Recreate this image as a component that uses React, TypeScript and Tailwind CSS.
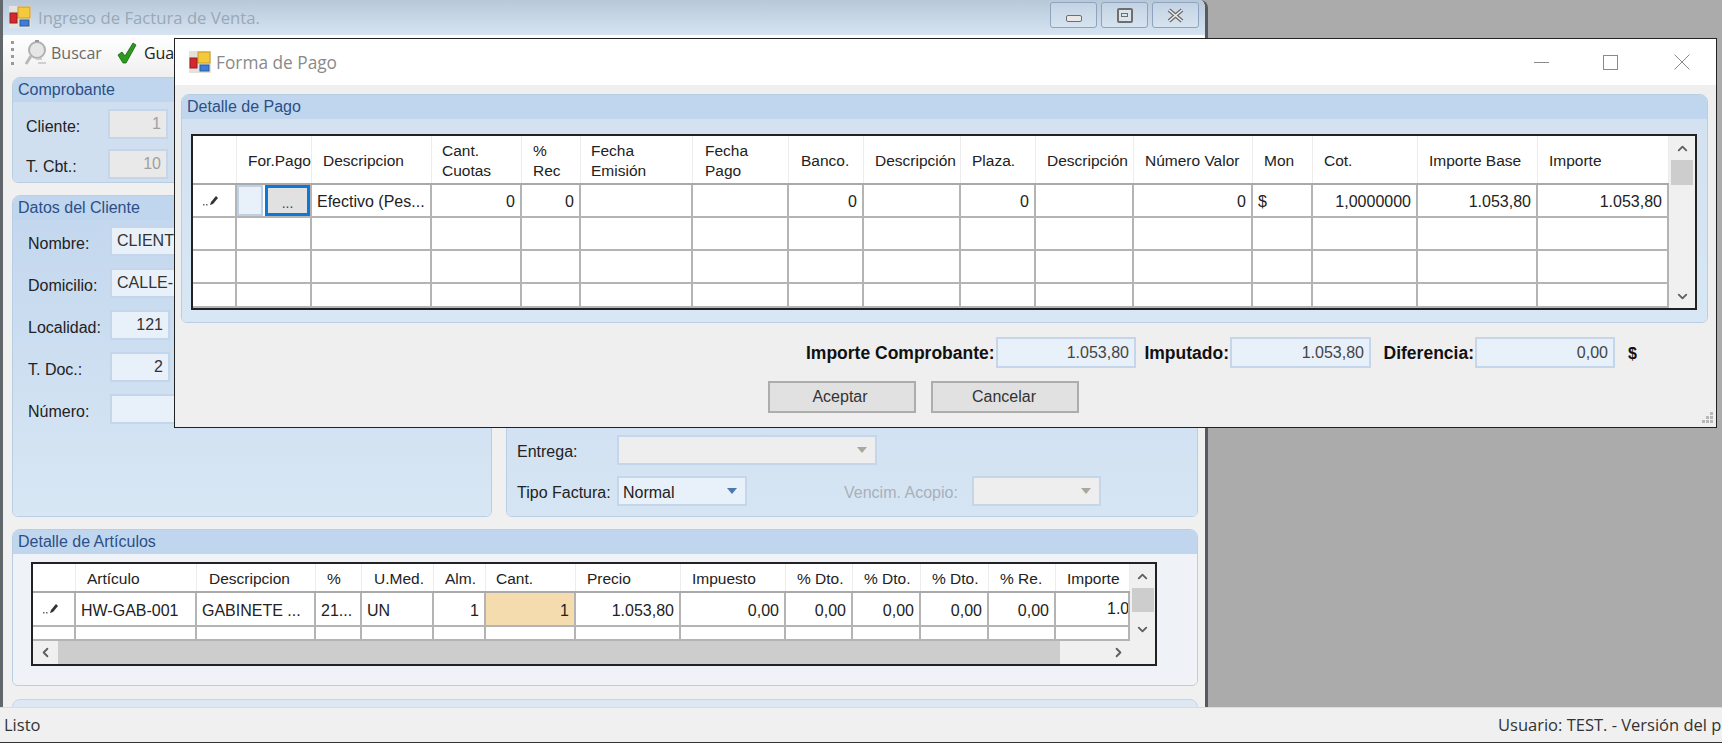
import { ChevronUp, ChevronDown, ChevronLeft, ChevronRight } from 'lucide-react';

const sans = "font-['Liberation_Sans',Arial,sans-serif]";
const ui = "font-['Open_Sans','Noto_Sans',sans-serif]";

function AppIcon() {
  return (
    <svg width="24" height="24" viewBox="0 0 24 24" className="shrink-0">
      <rect x="1" y="1" width="22" height="22" fill="#e4e2dc" />
      <rect x="10" y="2" width="12" height="11" fill="#f4c93c" stroke="#c89a28" />
      <rect x="2" y="8" width="7" height="10" fill="#d8262c" stroke="#8c2020" />
      <rect x="12" y="15" width="9" height="6" fill="#3d7fd8" stroke="#2a5aa0" />
    </svg>
  );
}

function SearchIcon() {
  return (
    <svg width="24" height="28" viewBox="0 0 24 28" fill="none" className="shrink-0">
      <circle cx="13" cy="11" r="8" fill="#e6e6e6" stroke="#b0b0b0" strokeWidth="2" />
      <path d="M7 17 L2 25" stroke="#b8b8b8" strokeWidth="3" />
      <path d="M12 20h6M14 24h8" stroke="#c4c4c4" strokeWidth="1.5" />
      <path d="M11 2h4" stroke="#999" strokeWidth="2" />
    </svg>
  );
}

function CheckIcon() {
  return (
    <svg width="20" height="22" viewBox="0 0 20 22" className="shrink-0">
      <path d="M1 13 L5 10 L8 14 L16 1 L19 3 L9 21 L6 21 Z" fill="#2b9a1e" stroke="#14620f" strokeWidth="0.8" />
    </svg>
  );
}

function PencilMark() {
  return (
    <svg width="18" height="12" viewBox="0 0 18 12" className="mb-[2px] mr-[6px]">
      <rect x="1" y="10" width="1.5" height="1.5" fill="#666" />
      <rect x="4" y="10" width="1.5" height="1.5" fill="#666" />
      <path d="M8 11 L9 8 L14 2 L16 4 L11 10 Z" fill="#333" />
    </svg>
  );
}

function Panel({ title, className, bodyClass, children }: { title?: string; className?: string; bodyClass?: string; children?: React.ReactNode }) {
  return (
    <div className={`flex flex-col rounded-t-lg rounded-b-md border border-[#b9cde3] overflow-hidden ${className ?? ''}`}>
      <div className={`h-[24px] shrink-0 bg-[#c0d6ee] pl-[5px] leading-[23px] text-[16px] text-[#2c4f86] ${sans}`}>{title}</div>
      <div className={`flex-1 ${bodyClass ?? ''}`}>{children}</div>
    </div>
  );
}

function Field({ label, value, w = 'w-[60px]', disabled, left }: { label: string; value?: string; w?: string; disabled?: boolean; left?: boolean }) {
  return (
    <div className="flex h-[30px] items-center">
      <span className={`w-[95px] shrink-0 pl-[13px] pt-[5px] text-[16px] text-[#222] ${sans}`}>{label}</span>
      <div
        className={`${w} h-[30px] shrink-0 border-2 border-[#c6d6ea] px-[5px] leading-[25px] text-[16px] ${sans} ${
          left ? 'text-left' : 'text-right'
        } ${disabled ? 'bg-[#e9e9e9] text-[#a0a0a0]' : 'bg-[#e8f0fa] text-[#333]'}`}
      >
        {value}
      </div>
    </div>
  );
}

function Combo({ value, w, disabled }: { value?: string; w: string; disabled?: boolean }) {
  return (
    <div
      className={`${w} flex h-[30px] items-center justify-between border-2 border-[#c6d6ea] pl-[4px] pr-[8px] text-[16px] text-[#222] ${sans} ${
        disabled ? 'bg-[#eeeeee]' : 'bg-[#e8f0fa]'
      }`}
    >
      <span className="pt-[3px]">{value}</span>
      <span className={`h-0 w-0 border-x-[5px] border-t-[6px] border-x-transparent ${disabled ? 'border-t-[#aaa89c]' : 'border-t-[#4a78b0]'}`} />
    </div>
  );
}

const CtlBtn = ({ children }: { children: React.ReactNode }) => (
  <div className="flex h-[26px] w-[47px] items-center justify-center rounded-[3px] border border-[#8ea3bd] bg-gradient-to-b from-[#c4d3e4] to-[#d6e3f0]">
    {children}
  </div>
);

type Cell = { text?: string; right?: boolean; bg?: string; custom?: React.ReactNode };

const payCols = 'grid-cols-[44px_75px_120px_90px_59px_112px_96px_75px_97px_75px_98px_119px_60px_105px_120px_131px]';
const payHeads = [
  '',
  'For.Pago',
  'Descripcion',
  'Cant.\nCuotas',
  '%\nRec',
  'Fecha\nEmisión',
  'Fecha\nPago',
  'Banco.',
  'Descripción',
  'Plaza.',
  'Descripción',
  'Número Valor',
  'Mon',
  'Cot.',
  'Importe Base',
  'Importe',
];
const payHeadPad = ['', 'pl-[11px]', 'pl-[11px]', 'pl-[10px]', 'pl-[11px]', 'pl-[10px]', 'pl-[12px]', 'pl-[12px]', 'pl-[11px]', 'pl-[11px]', 'pl-[11px]', 'pl-[11px]', 'pl-[11px]', 'pl-[11px]', 'pl-[11px]', 'pl-[11px]'];

const artCols = 'grid-cols-[43px_121px_119px_46px_72px_52px_90px_105px_105px_67px_68px_68px_67px_74px]';
const artHeads = ['', 'Artículo', 'Descripcion', '%', 'U.Med.', 'Alm.', 'Cant.', 'Precio', 'Impuesto', '% Dto.', '% Dto.', '% Dto.', '% Re.', 'Importe'];
const artHeadPad = ['', 'pl-[11px]', 'pl-[12px]', 'pl-[11px]', 'pl-[12px]', 'pl-[11px]', 'pl-[10px]', 'pl-[11px]', 'pl-[11px]', 'pl-[11px]', 'pl-[11px]', 'pl-[11px]', 'pl-[11px]', 'pl-[11px]'];

const artRow: Cell[] = [
  { custom: <PencilMark /> },
  { text: 'HW-GAB-001' },
  { text: 'GABINETE ...' },
  { text: '21...' },
  { text: 'UN' },
  { text: '1', right: true },
  { text: '1', right: true, bg: 'bg-[#f5dcae]' },
  { text: '1.053,80', right: true },
  { text: '0,00', right: true },
  { text: '0,00', right: true },
  { text: '0,00', right: true },
  { text: '0,00', right: true },
  { text: '0,00', right: true },
  { custom: <span className="pl-[51px]">1.053,80</span> },
];

const payRow: Cell[] = [
  { custom: <PencilMark /> },
  {
    custom: (
      <div className="flex h-full w-full">
        <div className="w-[26px] border-2 border-[#bfd0e6] bg-[#e8f0fa]" />
        <div className={`ml-[2px] flex flex-1 items-end justify-center border-[3px] border-[#0f78d4] bg-[#e1e1e1] pb-[3px] text-[14px] leading-none text-[#444] ${sans}`}>...</div>
      </div>
    ),
  },
  { text: 'Efectivo (Pes...' },
  { text: '0', right: true },
  { text: '0', right: true },
  {},
  {},
  { text: '0', right: true },
  {},
  { text: '0', right: true },
  {},
  { text: '0', right: true },
  { text: '$' },
  { text: '1,0000000', right: true },
  { text: '1.053,80', right: true },
  { text: '1.053,80', right: true },
];

function HeadRow({ cols, heads, pads, h }: { cols: string; heads: string[]; pads: string[]; h: string }) {
  return (
    <div className={`grid ${cols} ${h} border-b-2 border-[#a9a9a9] bg-white`}>
      {heads.map((t, i) => (
        <div key={i} className={`flex items-center overflow-hidden border-r border-[#ececec] pt-[2px] text-[15.5px] leading-[20px] text-[#222] ${sans} ${pads[i]}`}>
          <span className="whitespace-pre">{t}</span>
        </div>
      ))}
    </div>
  );
}

function BodyRow({ cols, cells, h, count }: { cols: string; cells?: Cell[]; h: string; count: number }) {
  const list: Cell[] = cells ?? Array.from({ length: count }, () => ({}));
  return (
    <div className={`grid ${cols} ${h} border-b-2 border-[#b4b4b4] bg-white`}>
      {list.map((c, i) => (
        <div
          key={i}
          className={`flex items-center overflow-hidden whitespace-nowrap border-r-2 border-[#b4b4b4] text-[16px] text-[#222] ${sans} ${
            i === 0 ? 'justify-center' : ''
          } ${c.right ? 'justify-end pr-[5px] pt-[3px]' : c.custom ? '' : 'pl-[5px] pt-[3px]'} ${c.bg ?? ''}`}
        >
          {c.custom ?? c.text}
        </div>
      ))}
    </div>
  );
}

function VScroll({ thumb }: { thumb: string }) {
  return (
    <div className="flex flex-1 flex-col items-center bg-[#f0f0f0]">
      <div className="flex h-[24px] items-center justify-center">
        <ChevronUp size={15} strokeWidth={3} className="text-[#606060]" />
      </div>
      <div className={`w-[22px] bg-[#cdcdcd] ${thumb}`} />
      <div className="flex-1" />
      <div className="flex h-[24px] items-center justify-center">
        <ChevronDown size={15} strokeWidth={3} className="text-[#606060]" />
      </div>
    </div>
  );
}

function Amount({ value, w }: { value: string; w: string }) {
  return (
    <div className={`${w} h-[31px] shrink-0 border-2 border-[#c6d6ea] bg-[#e8f0fa] pr-[5px] text-right text-[16px] leading-[28px] text-[#444] ${sans}`}>{value}</div>
  );
}

function BackWindow() {
  return (
    <div className="absolute left-0 top-0 flex h-[707px] w-[1208px] flex-col overflow-hidden rounded-tr-lg border-x-[3px] border-l-[#62676c] border-r-[#565a5e] bg-[#f0f0f0]">
      <div className={`flex h-[35px] shrink-0 items-center justify-between bg-gradient-to-b from-[#b8c8d9] to-[#d6e4f2] pl-[5px] pr-[6px]`}>
        <div className="flex items-center gap-[6px]">
          <AppIcon />
          <span className={`text-[16.7px] text-[#9aa8b7] ${ui}`}>Ingreso de Factura de Venta.</span>
        </div>
        <div className="mb-[5px] flex gap-[4px]">
          <CtlBtn>
            <div className="mt-[6px] h-[7px] w-[16px] rounded-[2px] border border-[#6e6e6e] bg-[#e8e8e8]" />
          </CtlBtn>
          <CtlBtn>
            <div className="flex h-[15px] w-[16px] items-center justify-center rounded-[2px] border-2 border-[#6e6e6e] bg-[#dce4ec]">
              <div className="h-[4px] w-[7px] border border-[#6e6e6e]" />
            </div>
          </CtlBtn>
          <CtlBtn>
            <svg width="17" height="15" viewBox="0 0 17 15">
              <path d="M2 2 L15 13 M15 2 L2 13" stroke="#6a6a6a" strokeWidth="4" />
              <path d="M2 2 L15 13 M15 2 L2 13" stroke="#eeeeee" strokeWidth="1.6" />
            </svg>
          </CtlBtn>
        </div>
      </div>

      <div className="flex h-[42px] shrink-0 items-center rounded-t-[3px] bg-gradient-to-b from-white to-[#efefef] pb-[7px] pl-[8px]">
        <div className="flex h-[24px] w-[2px] flex-col justify-between">
          {[0, 1, 2, 3].map((d) => (
            <div key={d} className="h-[3px] w-[3px] bg-[#9a9a9a]" />
          ))}
        </div>
        <div className="ml-[11px]">
          <SearchIcon />
        </div>
        <span className={`ml-[3px] text-[16px] text-[#6a6a6a] ${ui}`}>Buscar</span>
        <div className="ml-[15px]">
          <CheckIcon />
        </div>
        <span className={`ml-[7px] text-[16px] text-[#222] ${ui}`}>Guardar</span>
      </div>

      <div className="flex flex-1 flex-col pl-[9px] pr-[7px]">
        <div className="flex h-[440px] shrink-0 gap-[14px]">
          <div className="flex w-[480px] flex-col gap-[12px]">
            <Panel title="Comprobante" className="h-[106px] shrink-0" bodyClass="bg-[#cfdff0] flex flex-col gap-[10px] pt-[7px]">
              <Field label="Cliente:" value="1" disabled />
              <Field label="T. Cbt.:" value="10" disabled />
            </Panel>
            <Panel title="Datos del Cliente" className="flex-1" bodyClass="bg-gradient-to-b from-[#c3d7ee] to-[#d8e7f4] flex flex-col gap-[12px] pt-[6px] pl-[2px]">
              <Field label="Nombre:" value="CLIENTE" w="w-[300px]" left />
              <Field label="Domicilio:" value="CALLE-" w="w-[300px]" left />
              <Field label="Localidad:" value="121" />
              <Field label="T. Doc.:" value="2" />
              <Field label="Número:" w="w-[300px]" />
            </Panel>
          </div>
          <Panel className="flex-1" bodyClass="bg-gradient-to-b from-[#c3d7ee] to-[#d6e5f3] flex flex-col justify-end gap-[11px] pb-[10px]">
            <div className="flex items-center">
              <span className={`w-[110px] pl-[10px] pt-[4px] text-[16px] text-[#222] ${sans}`}>Entrega:</span>
              <Combo w="w-[260px]" disabled />
            </div>
            <div className="flex items-center">
              <span className={`w-[110px] pl-[10px] pt-[4px] text-[16px] text-[#222] ${sans}`}>Tipo Factura:</span>
              <Combo value="Normal" w="w-[130px]" />
              <span className={`ml-[97px] w-[128px] pt-[4px] text-[16px] text-[#a8b0ba] ${sans}`}>Vencim. Acopio:</span>
              <Combo w="w-[129px]" disabled />
            </div>
          </Panel>
        </div>

        <Panel title="Detalle de Artículos" className="mt-[12px] h-[157px] shrink-0" bodyClass="bg-[#eff2f7] pt-[8px] pl-[18px]">
          <div className="flex h-[104px] w-[1126px] flex-col border-2 border-[#222] bg-white">
            <div className="flex h-[77px] shrink-0">
              <div className="w-[1097px] shrink-0 overflow-hidden">
                <HeadRow cols={artCols} heads={artHeads} pads={artHeadPad} h="h-[29px]" />
                <BodyRow cols={artCols} cells={artRow} h="h-[34px]" count={14} />
                <BodyRow cols={artCols} h="h-[14px] border-b-0" count={14} />
              </div>
              <div className="flex flex-1">
                <VScroll thumb="h-[24px]" />
              </div>
            </div>
            <div className="flex h-[23px] shrink-0 bg-[#f0f0f0]">
              <div className="flex w-[25px] items-center justify-center">
                <ChevronLeft size={15} strokeWidth={3} className="text-[#606060]" />
              </div>
              <div className="w-[1002px] bg-[#cdcdcd]" />
              <div className="flex-1" />
              <div className="mr-[19px] flex w-[35px] items-center justify-center">
                <ChevronRight size={15} strokeWidth={3} className="text-[#606060]" />
              </div>
            </div>
          </div>
        </Panel>

        <div className="mt-[13px] h-[20px] shrink-0 rounded-t-lg border border-[#c3d5e8] bg-[#dde8f4]" />
      </div>
    </div>
  );
}

function PaymentDialog() {
  return (
    <div className="absolute left-[174px] top-[38px] flex h-[390px] w-[1543px] flex-col border border-[#222] bg-[#efefef]">
      <div className="flex h-[46px] shrink-0 items-center justify-between bg-white pl-[13px]">
        <div className="flex items-center gap-[4px]">
          <AppIcon />
          <span className={`pt-[1px] text-[17.3px] text-[#8a8a8a] ${ui}`}>Forma de Pago</span>
        </div>
        <div className="flex items-center pr-[26px]">
          <div className="h-px w-[15px] bg-[#8a8a8a]" />
          <div className="ml-[54px] h-[15px] w-[15px] border border-[#8a8a8a]" />
          <svg width="16" height="16" viewBox="0 0 16 16" className="ml-[56px]">
            <path d="M0.5 0.5 L15.5 15.5 M15.5 0.5 L0.5 15.5" stroke="#8a8a8a" strokeWidth="1" />
          </svg>
        </div>
      </div>

      <div className="px-[6px] pt-[9px]">
        <Panel title="Detalle de Pago" className="h-[229px] w-[1527px]" bodyClass="bg-gradient-to-b from-[#d3e1f1] to-[#d8e7f4] pt-[15px] pl-[9px]">
          <div className="flex h-[176px] w-[1506px] border-2 border-[#222] bg-white">
            <div className="w-[1476px] shrink-0 overflow-hidden">
              <HeadRow cols={payCols} heads={payHeads} pads={payHeadPad} h="h-[49px]" />
              <BodyRow cols={payCols} cells={payRow} h="h-[33px]" count={16} />
              <BodyRow cols={payCols} h="h-[33px]" count={16} />
              <BodyRow cols={payCols} h="h-[33px]" count={16} />
              <BodyRow cols={payCols} h="h-[24px] border-b-0" count={16} />
            </div>
            <VScroll thumb="h-[25px]" />
          </div>
        </Panel>
      </div>

      <div className="mt-[14px] flex items-center pl-[631px]">
        <span className={`w-[190px] pr-[5px] pt-[2px] text-right text-[17.5px] font-bold whitespace-nowrap text-[#111] ${sans}`}>Importe Comprobante:</span>
        <Amount value="1.053,80" w="w-[140px]" />
        <span className={`w-[94px] pr-[1px] pt-[2px] text-right text-[17.5px] font-bold text-[#111] ${sans}`}>Imputado:</span>
        <Amount value="1.053,80" w="w-[141px]" />
        <span className={`w-[104px] pr-[1px] pt-[2px] text-right text-[17.5px] font-bold text-[#111] ${sans}`}>Diferencia:</span>
        <Amount value="0,00" w="w-[140px]" />
        <span className={`ml-[13px] pt-[2px] text-[16px] font-bold text-[#111] ${sans}`}>$</span>
      </div>

      <div className={`mt-[13px] flex gap-[15px] pl-[593px] text-[16px] text-[#333] ${sans}`}>
        <button className="h-[32px] w-[148px] border-2 border-[#adadad] bg-[#e1e1e1] pr-[4px]">Aceptar</button>
        <button className="h-[32px] w-[148px] border-2 border-[#adadad] bg-[#e1e1e1] pr-[2px]">Cancelar</button>
      </div>

      {/* grip de la esquina */}
      <svg width="14" height="14" viewBox="0 0 14 14" className="absolute bottom-[2px] right-[2px]">
        {[[10, 1], [6, 5], [10, 5], [2, 9], [6, 9], [10, 9]].map(([x, y]) => (
          <rect key={`${x}-${y}`} x={x} y={y} width="3" height="3" fill="#b8b8b8" />
        ))}
      </svg>
    </div>
  );
}

export default function App() {
  return (
    <div className="flex h-[743px] w-full flex-col overflow-hidden bg-[#ababab]">
      <div className="relative flex-1">
        <BackWindow />
        <PaymentDialog />
      </div>
      <div className={`flex h-[36px] shrink-0 items-center justify-between border-y border-b-[#333] border-t-[#dcdcdc] bg-[#f0f0f0] pl-[4px] pt-[1px] text-[16.5px] text-[#333] ${ui}`}>
        <span>Listo</span>
        <span className="w-[224px] overflow-hidden whitespace-nowrap">Usuario: TEST. - Versión del programa</span>
      </div>
    </div>
  );
}
